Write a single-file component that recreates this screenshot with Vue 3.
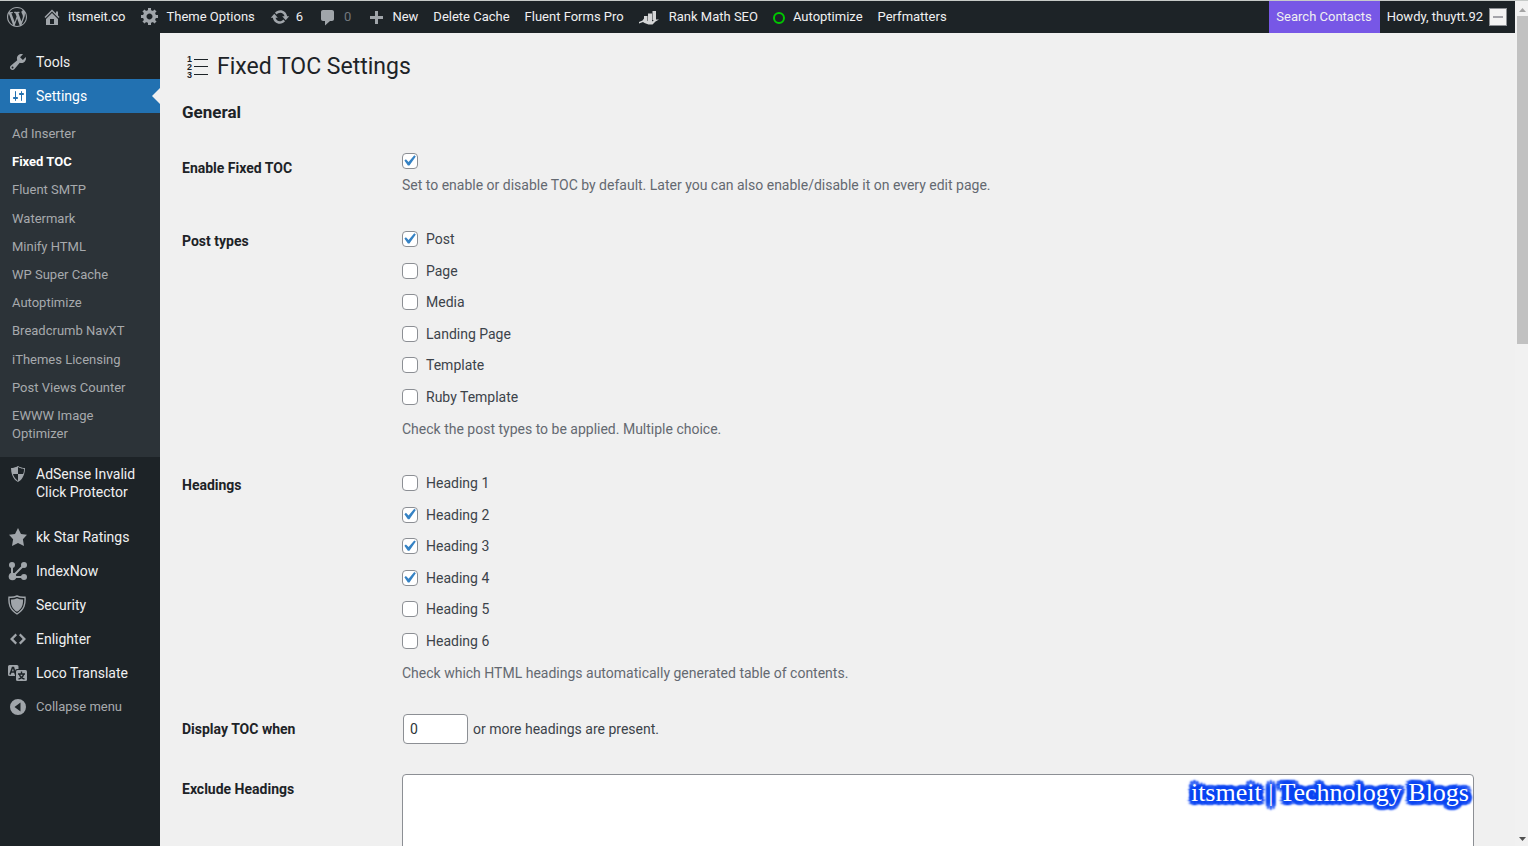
<script setup>
import { ref } from 'vue'

const icons = {
  wordpress: 'M20 10c0-5.51-4.49-10-10-10C4.48 0 0 4.49 0 10c0 5.52 4.48 10 10 10 5.51 0 10-4.48 10-10zM7.78 15.37L4.37 6.22c.55-.02 1.17-.08 1.17-.08.5-.06.44-1.13-.06-1.11 0 0-1.45.11-2.37.11-.18 0-.37 0-.58-.01C4.12 2.69 6.87 1.11 10 1.11c2.33 0 4.45.87 6.05 2.34-.68-.11-1.65.39-1.65 1.58 0 .74.45 1.36.9 2.1.35.61.55 1.36.55 2.46 0 1.49-1.4 5-1.4 5l-3.03-8.37c.54-.02.82-.17.82-.17.5-.05.44-1.25-.06-1.22 0 0-1.44.12-2.38.12-.87 0-2.33-.12-2.33-.12-.5-.03-.56 1.2-.06 1.22l.92.08 1.26 3.41zM17.41 10c.24-.64.74-1.87.43-4.25.7 1.29 1.05 2.71 1.05 4.25 0 3.29-1.73 6.24-4.4 7.78.97-2.59 1.94-5.2 2.92-7.78zM6.1 18.09C3.12 16.65 1.11 13.53 1.11 10c0-1.3.23-2.48.72-3.59C3.25 10.3 4.67 14.2 6.1 18.09zm4.03-6.63l2.58 6.98c-.86.29-1.76.45-2.71.45-.79 0-1.57-.11-2.29-.33.81-2.38 1.62-4.74 2.42-7.1z',
  home: 'M16 8.5l1.53 1.53-1.06 1.06L10 4.6l-6.47 6.49-1.06-1.06L10 2.5l4 4v-2h2v4zm-6-2.46l6 5.99V18H4v-5.97zM12 17v-5H8v5h4z',
  gear: 'M18 11h-2.18c-.17.7-.44 1.35-.81 1.93l1.54 1.54-2.1 2.1-1.54-1.54c-.58.36-1.23.63-1.91.79V18H8v-2.18c-.68-.16-1.33-.43-1.91-.79l-1.54 1.54-2.12-2.12 1.54-1.54c-.36-.58-.63-1.23-.79-1.91H1V8.03h2.17c.16-.7.44-1.35.8-1.94L2.43 4.55l2.1-2.1 1.54 1.54c.58-.37 1.24-.64 1.93-.81V1h3v2.18c.68.16 1.33.43 1.91.79l1.54-1.54 2.12 2.12-1.54 1.54c.36.59.64 1.24.8 1.94H18V11zm-8.5 1.5c1.66 0 3-1.34 3-3s-1.34-3-3-3-3 1.34-3 3 1.34 3 3 3z',
  update: 'M10.2 3.28c3.53 0 6.43 2.61 6.92 6h2.08l-3.5 4-3.5-4h2.32c-.45-1.97-2.21-3.45-4.32-3.45-1.45 0-2.73.71-3.54 1.78L4.95 5.66C6.23 4.2 8.11 3.28 10.2 3.28zm-.4 13.44c-3.52 0-6.43-2.61-6.92-6H.8l3.5-4c1.17 1.33 2.33 2.67 3.5 4H5.48c.45 1.97 2.21 3.45 4.32 3.45 1.45 0 2.73-.71 3.54-1.78l1.71 1.95c-1.28 1.46-3.15 2.38-5.25 2.38z',
  comment: 'M5 3h9c1.1 0 2 .9 2 2v7c0 1.1-.9 2-2 2h-2l-5 4.5v-4.5H5c-1.1 0-2-.9-2-2V5c0-1.1.9-2 2-2z',
  plus: 'M17 9v3h-5v5H9v-5H4V9h5V4h3v5h5z',
  tools: 'M16.68 9.77c-1.34 1.34-3.3 1.67-4.95.99l-5.41 6.52c-.99.99-2.59.99-3.58 0s-.99-2.59 0-3.57l6.52-5.42c-.68-1.65-.35-3.61.99-4.95 1.28-1.28 3.12-1.62 4.72-1.06l-2.89 2.89 2.82 2.82 2.86-2.87c.53 1.58.18 3.39-1.08 4.65zM3.81 16.21c.4.39 1.04.39 1.43 0 .4-.4.4-1.04 0-1.43-.39-.4-1.03-.4-1.43 0-.39.39-.39 1.03 0 1.43z',
  settings: 'M18 16V4c0-.55-.45-1-1-1H3c-.55 0-1 .45-1 1v12c0 .55.45 1 1 1h14c.55 0 1-.45 1-1zM8 11h1c.55 0 1 .45 1 1s-.45 1-1 1H8v1.5c0 .28-.22.5-.5.5s-.5-.22-.5-.5V13H6c-.55 0-1-.45-1-1s.45-1 1-1h1V5.5c0-.28.22-.5.5-.5s.5.22.5.5V11zm5-2h-1c-.55 0-1-.45-1-1s.45-1 1-1h1V5.5c0-.28.22-.5.5-.5s.5.22.5.5V7h1c.55 0 1 .45 1 1s-.45 1-1 1h-1v5.5c0 .28-.22.5-.5.5s-.5-.22-.5-.5V9z',
  shield: 'M10 2s3 2 7 2c0 11-7 14-7 14S3 15 3 4c4 0 7-2 7-2zm0 8h5s1-1 1-5c0 0-5-1-6-2v7H5c1 4 5 7 5 7v-7z',
  star: 'M10 1l3 6 6 .75-4.12 4.62L16 19l-6-3-6 3 1.13-6.63L1 7.75 7 7z',
  code: 'M7.5 4.5L9 6.2 5.3 10 9 13.8 7.5 15.5 2 10zM12.5 4.5L11 6.2l3.7 3.8-3.7 3.8 1.5 1.7L18 10z',
  collapse: 'M10 2a8 8 0 1 1 0 16 8 8 0 0 1 0-16zM12.5 5.5L6.5 10l6 4.5z'
}

const barItems = [
  { label: 'itsmeit.co', icon: 'home' },
  { label: 'Theme Options', icon: 'gear' },
  { label: '6', icon: 'update' },
  { label: '0', icon: 'comment', muted: true },
  { label: 'New', icon: 'plus' },
  { label: 'Delete Cache' },
  { label: 'Fluent Forms Pro' },
  { label: 'Rank Math SEO', icon: 'rank' },
  { label: 'Autoptimize', icon: 'ring' },
  { label: 'Perfmatters' }
]

const submenu = [
  'Ad Inserter', 'Fixed TOC', 'Fluent SMTP', 'Watermark', 'Minify HTML', 'WP Super Cache',
  'Autoptimize', 'Breadcrumb NavXT', 'iThemes Licensing', 'Post Views Counter', 'EWWW Image Optimizer'
]

const plugins = [
  { label: 'kk Star Ratings', icon: 'star' },
  { label: 'IndexNow', icon: 'index' },
  { label: 'Security', icon: 'security' },
  { label: 'Enlighter', icon: 'code' },
  { label: 'Loco Translate', icon: 'loco' }
]

const enabled = ref(true)
const minimum = ref('0')
const excluded = ref('')
const postTypes = ref([
  { label: 'Post', on: true },
  { label: 'Page', on: false },
  { label: 'Media', on: false },
  { label: 'Landing Page', on: false },
  { label: 'Template', on: false },
  { label: 'Ruby Template', on: false }
])
const headings = ref([1, 2, 3, 4, 5, 6].map(n => ({ label: `Heading ${n}`, on: n > 1 && n < 5 })))
</script>

<template>
  <div class="screen">
    <div class="page">
      <header class="adminbar">
        <a class="bar-item" href="#" aria-label="About WordPress">
          <svg class="icon" viewBox="0 0 20 20"><path :d="icons.wordpress" /></svg>
        </a>
        <a v-for="item in barItems" :key="item.label" class="bar-item" :class="{ muted: item.muted }" href="#">
          <svg v-if="item.icon === 'rank'" class="icon light" viewBox="0 0 20 20">
            <path d="M5 9h3.500v6H5zM9 6.500h4V15H9zM13.500 4H17v9h-3.500z" />
            <path d="M0 15l3.500-1.500 1.500-2 3.500 2.500 4 1 3-2.500h4.500l-3.500 2-3 3h-4l-4-1.500-1.500-1L0 16.500z" />
          </svg>
          <span v-else-if="item.icon === 'ring'" class="ring"></span>
          <svg v-else-if="item.icon" class="icon" viewBox="0 0 20 20"><path fill-rule="evenodd" :d="icons[item.icon]" /></svg>
          <span>{{ item.label }}</span>
        </a>
        <a class="bar-item search" href="#">Search Contacts</a>
        <a class="bar-item account" href="#">
          <span>Howdy, thuytt.92</span>
          <span class="avatar"><i></i></span>
        </a>
      </header>

      <div class="body">
        <nav class="sidebar">
          <a class="menu-item" href="#">
            <svg class="icon" viewBox="0 0 20 20"><path fill-rule="evenodd" :d="icons.tools" /></svg>
            <span>Tools</span>
          </a>
          <a class="menu-item current" href="#">
            <svg class="icon" viewBox="0 0 20 20"><path :d="icons.settings" /></svg>
            <span>Settings</span>
          </a>
          <ul class="submenu">
            <li v-for="name in submenu" :key="name">
              <a href="#" :class="{ active: name === 'Fixed TOC' }">{{ name }}</a>
            </li>
          </ul>
          <a class="menu-item tall" href="#">
            <svg class="icon" viewBox="0 0 20 20"><path fill-rule="evenodd" :d="icons.shield" /></svg>
            <span>AdSense Invalid Click Protector</span>
          </a>
          <a v-for="item in plugins" :key="item.label" class="menu-item" href="#">
            <svg v-if="item.icon === 'index'" class="icon" viewBox="0 0 20 20">
              <path d="M4 4v12h12M4 16L16 4" fill="none" stroke="currentColor" stroke-width="2" />
              <circle cx="4" cy="4" r="3" /><circle cx="16" cy="4" r="3" />
              <circle cx="4.5" cy="15.5" r="3.8" /><circle cx="16" cy="16" r="3" />
            </svg>
            <svg v-else-if="item.icon === 'security'" class="icon" viewBox="0 0 20 20">
              <path d="M9 1c2.5 1.2 5 1.5 8 1.2.5 7-.7 12.3-8 16.800C1.700 14.500.5 9.200 1 2.200 4 2.500 6.500 2.200 9 1z" fill="none" stroke="currentColor" stroke-width="1.4" />
              <path d="M9 3.200c2 1 4 1.300 6 1.200.2 5.300-1 9.300-6 12.300-5-3-6.200-7-6-12.300 2 .1 4-.2 6-1.200z" />
            </svg>
            <svg v-else-if="item.icon === 'loco'" class="icon" viewBox="0 0 20 20">
              <path d="M1.500 2H9a1.500 1.500 0 0 1 1.500 1.500V6H9a2 2 0 0 0-2 2v5H1.500A1.500 1.500 0 0 1 0 11.500v-8A1.500 1.500 0 0 1 1.500 2z" />
              <rect x="8" y="7" width="11" height="11" rx="1.5" />
              <path d="M2 11.500L4.500 4.500h1l2 7M3 9h4" fill="none" stroke="#1d2327" stroke-width="1.6" />
              <path d="M13.500 8.500v2M10 11h7M11.500 11.500c.5 2 2.500 4 5 4.500M15.500 11.500c-.5 2-2.500 4-5 4.500" fill="none" stroke="#1d2327" stroke-width="1.4" />
            </svg>
            <svg v-else class="icon" viewBox="0 0 20 20"><path :d="icons[item.icon]" /></svg>
            <span>{{ item.label }}</span>
          </a>
          <button class="menu-item collapse" type="button">
            <svg class="icon" viewBox="0 0 20 20"><path fill-rule="evenodd" :d="icons.collapse" /></svg>
            <span>Collapse menu</span>
          </button>
        </nav>

        <main class="content">
          <h1>
            <svg class="list-icon" viewBox="0 0 22 24" aria-hidden="true">
              <path d="M7 4.500h14M7 11.500h14M7 19.500h14" />
              <text x="0" y="7">1</text><text x="0" y="15">2</text><text x="0" y="23">3</text>
            </svg>
            Fixed TOC Settings
          </h1>
          <h2>General</h2>

          <form @submit.prevent>
            <div class="row">
              <label class="name" for="enable">Enable Fixed TOC</label>
              <div class="field">
                <input id="enable" v-model="enabled" class="check" type="checkbox" />
                <p class="hint">Set to enable or disable TOC by default. Later you can also enable/disable it on every edit page.</p>
              </div>
            </div>
            <div class="row" role="group" aria-labelledby="types">
              <span id="types" class="name">Post types</span>
              <div class="field">
                <div class="choices">
                  <label v-for="type in postTypes" :key="type.label">
                    <input v-model="type.on" class="check" type="checkbox" />{{ type.label }}
                  </label>
                </div>
                <p class="hint after-list">Check the post types to be applied. Multiple choice.</p>
              </div>
            </div>
            <div class="row" role="group" aria-labelledby="levels">
              <span id="levels" class="name">Headings</span>
              <div class="field">
                <div class="choices">
                  <label v-for="heading in headings" :key="heading.label">
                    <input v-model="heading.on" class="check" type="checkbox" />{{ heading.label }}
                  </label>
                </div>
                <p class="hint after-list">Check which HTML headings automatically generated table of contents.</p>
              </div>
            </div>
            <div class="row">
              <label class="name" for="minimum">Display TOC when</label>
              <div class="field inline">
                <input id="minimum" v-model="minimum" class="number" type="text" inputmode="numeric" />
                <span>or more headings are present.</span>
              </div>
            </div>
            <div class="row">
              <label class="name" for="exclude">Exclude Headings</label>
              <div class="field">
                <textarea id="exclude" v-model="excluded" rows="10"></textarea>
              </div>
            </div>
          </form>
        </main>
      </div>
    </div>

    <div class="scrollbar" aria-hidden="true">
      <svg viewBox="0 0 11 15"><path d="M2 11h7L5.5 7z" fill="#a3a3a3" /></svg>
      <div class="thumb"></div>
      <svg class="down" viewBox="0 0 11 15"><path d="M2 6h7l-3.5 4z" fill="#505050" /></svg>
    </div>

    <div class="watermark">itsmeit | Technology Blogs</div>
  </div>
</template>

<style>
body {
  margin: 0;
  background: #f0f0f1;
}
</style>

<style scoped>
* {
  box-sizing: border-box;
}

.screen {
  position: relative;
  display: flex;
  height: 100vh;
  overflow: hidden;
  border-top: 1px solid #c6cac8;
  background: #f0f0f0;
  color: #3c434a;
  font: 14px/20px Roboto, sans-serif;
}

a {
  color: inherit;
  text-decoration: none;
}

.page {
  display: flex;
  flex: 1;
  flex-direction: column;
  min-width: 0;
}

.icon {
  flex: none;
  width: 20px;
  height: 20px;
  color: #a0a5aa;
  fill: currentColor;
}

.adminbar {
  display: flex;
  flex: none;
  height: 32px;
  background: #1d2327;
  color: #f0f0f1;
  font-size: 13px;
  white-space: nowrap;
}

.bar-item {
  display: flex;
  align-items: center;
  gap: 6px;
  padding: 0 8px 0 7px;
}

.bar-item.muted span {
  color: #72777c;
}

.icon.light {
  margin-right: 4px;
  color: #d5d6d7;
}

.ring {
  width: 12px;
  height: 12px;
  margin: 2px 2px 0 0;
  border: 2px solid #00c800;
  border-radius: 50%;
}

.search {
  margin-left: auto;
  background: #7757e6;
}

.avatar {
  display: flex;
  align-items: center;
  justify-content: center;
  width: 18px;
  height: 18px;
  border: 1px solid #8c8f94;
  background: #f3f3f3;
}

.avatar i {
  width: 10px;
  height: 2px;
  background: #a4a4aa;
}

.body {
  display: flex;
  flex: 1;
  min-height: 0;
}

.sidebar {
  flex: none;
  width: 160px;
  padding-top: 12px;
  background: #1d2327;
  color: #f0f0f1;
}

.menu-item {
  position: relative;
  display: flex;
  gap: 8px;
  width: 100%;
  padding: 8px;
  line-height: 18px;
}

.menu-item .icon {
  margin: -1px 0;
}

.current {
  background: #2271b1;
  color: #fff;
}

.current .icon {
  color: #fff;
}

.current::after {
  content: "";
  position: absolute;
  top: 9px;
  right: 0;
  border: 8px solid transparent;
  border-right-color: #f0f0f1;
  border-left: 0;
}

.submenu {
  display: flex;
  flex-direction: column;
  justify-content: space-between;
  height: 344px;
  margin: 0;
  padding: 7px 12px 9px;
  background: #2c3338;
  color: #a7aaad;
  font-size: 13px;
  line-height: 18px;
  list-style: none;
}

.submenu a {
  display: block;
  padding: 5px 0;
}

.submenu .active {
  color: #fff;
  font-weight: 700;
}

.tall {
  margin-bottom: 11px;
}

.collapse {
  border: 0;
  background: none;
  color: #a7aaad;
  font: 13px/18px Roboto, sans-serif;
  text-align: left;
}

.content {
  flex: 1;
  min-width: 0;
  padding: 17px 41px 0 22px;
  overflow: hidden;
}

h1 {
  display: flex;
  align-items: center;
  gap: 8px;
  margin: 0;
  padding-left: 5px;
  color: #1d2327;
  font-size: 23px;
  font-weight: 400;
  line-height: 34px;
}

.list-icon {
  width: 22px;
  height: 24px;
  overflow: visible;
  stroke: #1d2327;
  fill: none;
}

.list-icon text {
  stroke: none;
  fill: #1d2327;
  font: 700 9px "Liberation Sans", sans-serif;
}

h2 {
  margin: 18px 0 17px;
  color: #1d2327;
  font-size: 17px;
  font-weight: 700;
  line-height: 20px;
}

.row {
  display: grid;
  grid-template-columns: 220px minmax(0, 1fr);
}

.name {
  padding: 20px 10px 0 0;
  color: #1d2327;
  font-weight: 700;
  line-height: 18px;
}

.field {
  padding: 14px 0 16px;
}

.check {
  display: block;
  flex: none;
  width: 16px;
  height: 16px;
  margin: 0;
  border: 1px solid #8c8f94;
  border-radius: 4px;
  background: #fff;
  appearance: none;
}

.check:checked::before {
  content: "";
  display: block;
  width: 22px;
  height: 22px;
  margin: -4px 0 0 -5px;
  background: #3582c4;
  clip-path: polygon(74% 24%, 81% 29%, 52% 71%, 45% 71%, 29% 48%, 36% 42%, 48% 54%);
}

.hint {
  margin: 6px 0 0;
  color: #646970;
  line-height: 21px;
}

.after-list {
  margin-top: 9px;
}

.choices {
  display: flex;
  flex-direction: column;
  align-items: flex-start;
  justify-content: space-between;
  height: 184px;
}

.choices label {
  display: flex;
  align-items: center;
  gap: 8px;
  height: 26px;
}

.inline {
  display: flex;
  align-items: center;
  gap: 5px;
  padding-left: 1px;
}

.number {
  width: 65px;
  height: 30px;
  padding: 0 6px;
  border: 1px solid #8c8f94;
  border-radius: 4px;
  background: #fff;
  color: #2c3338;
  font: 14px Roboto, sans-serif;
}

textarea {
  display: block;
  width: 100%;
  border: 1px solid #8c8f94;
  border-radius: 4px;
  background: #fff;
  font: 14px/20px Roboto, sans-serif;
  resize: none;
}

.scrollbar {
  display: flex;
  flex: none;
  flex-direction: column;
  width: 13px;
  padding-left: 2px;
  background: #f1f1f1;
}

.scrollbar svg {
  width: 11px;
  height: 15px;
}

.thumb {
  height: calc(39% - 2px);
  background: #c1c1c1;
}

.down {
  margin-top: auto;
}

.watermark {
  position: absolute;
  right: 59px;
  bottom: 38px;
  color: #fff;
  font: 26px/30px "Liberation Serif", serif;
  text-shadow: 0 0 2px #0c46f2, 3px 0 2px #0c46f2, -3px 0 2px #0c46f2, 0 3px 2px #0c46f2, 0 -3px 2px #0c46f2,
    2px 2px 2px #0c46f2, -2px 2px 2px #0c46f2, 2px -2px 2px #0c46f2, -2px -2px 2px #0c46f2,
    4px 0 2px #0c46f2, -4px 0 2px #0c46f2, 0 4px 2px #0c46f2, 0 -4px 2px #0c46f2,
    3px 3px 2px #0c46f2, -3px 3px 2px #0c46f2, 3px -3px 2px #0c46f2, -3px -3px 2px #0c46f2;
}
</style>
